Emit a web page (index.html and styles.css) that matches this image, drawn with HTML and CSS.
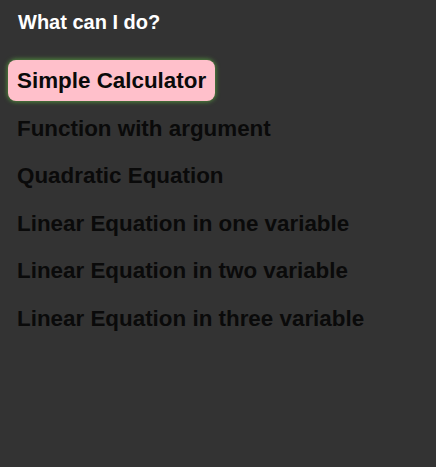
FILE: index.html
```html
<!DOCTYPE html>
<html>
<head>
<meta charset="utf-8">
<link rel="stylesheet" href="styles.css">
</head>
<body>
<div class="page">
  <h1 class="title">What can I do?</h1>
  <ul class="menu">
    <li class="item active">Simple Calculator</li>
    <li class="item">Function with argument</li>
    <li class="item">Quadratic Equation</li>
    <li class="item">Linear Equation in one variable</li>
    <li class="item">Linear Equation in two variable</li>
    <li class="item">Linear Equation in three variable</li>
  </ul>
</div>
</body>
</html>
```
FILE: styles.css
```css
html, body {
  margin: 0;
  padding: 0;
  background: #333333;
  height: 100%;
}
body {
  font-family: "Liberation Sans", Arial, sans-serif;
}
.page {
  padding: 9px 8px;
}
.title {
  margin: 0 0 0 10px;
  font-size: 20px;
  line-height: 26px;
  font-weight: bold;
  color: #ffffff;
}
.menu {
  list-style: none;
  margin: 25px 0 0 0;
  padding: 0;
  display: flex;
  flex-direction: column;
  gap: 6.6px;
}
.item {
  align-self: flex-start;
  padding: 8px 9px;
  font-size: 22.4px;
  line-height: 25px;
  font-weight: bold;
  color: #0a0a0a;
  border-radius: 8px;
}
.item.active {
  background: #ffc0cb;
  box-shadow: 0 0 4px 1px #4f8a3c;
}
```
